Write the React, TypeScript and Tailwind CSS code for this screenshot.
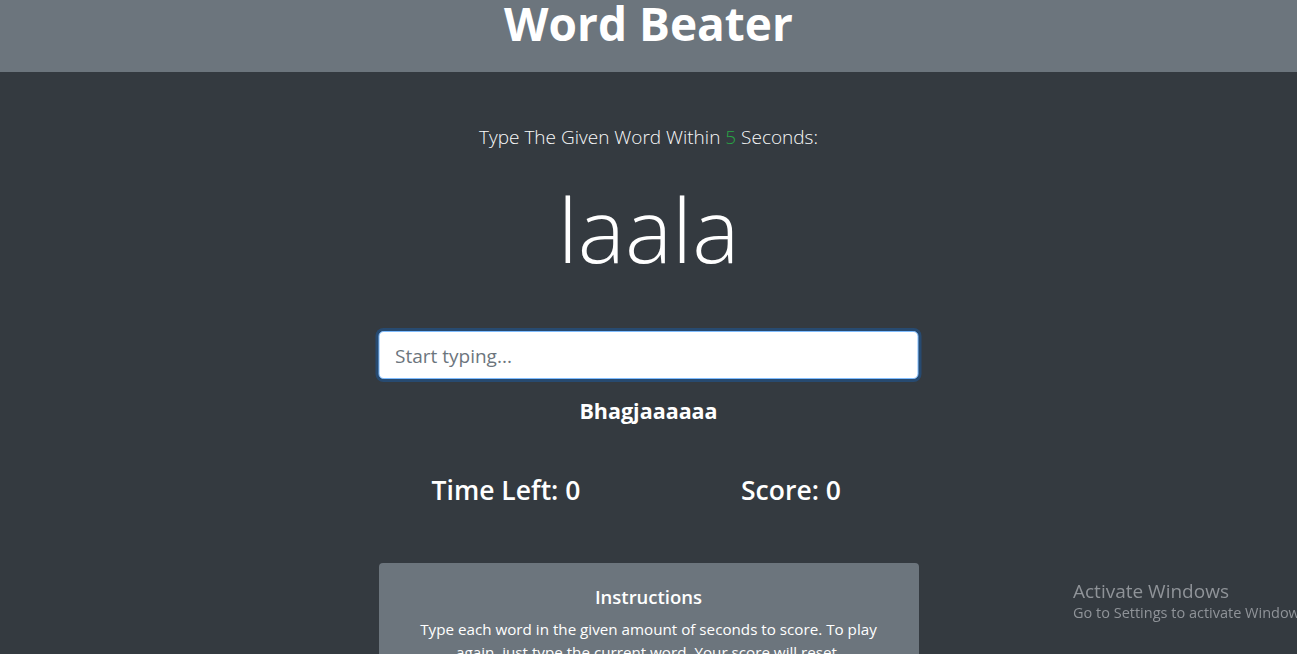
import React from "react";

export default function App() {
  const font = { fontFamily: '"Open Sans", "Noto Sans", sans-serif' };
  return (
    <div className="min-h-screen bg-[#343a40] text-white" style={font}>
      <header className="h-[72px] bg-[#6c757d] overflow-hidden flex justify-center">
        <h1 className="text-[46px] font-bold leading-[48px] mt-[-1px] text-white">Word Beater</h1>
      </header>
      <main className="flex flex-col items-center">
        <p className="mt-[50px] h-[30px] leading-[30px] text-[19px] font-light text-[#f8f9fa]">
          Type The Given Word Within <span className="text-[#28a745]">5</span> Seconds:
        </p>
        <h2 className="mt-[22px] h-[110px] leading-[110px] text-[89px] font-light">laala</h2>
        <div className="mt-[47px] w-[540px] -translate-x-[0.5px]">
          <input
            className="w-full h-[48px] rounded-[5px] border border-[#80bdff] bg-white px-4 pt-[2px] text-[19px] text-[#495057] placeholder:text-[#6c757d] outline-none shadow-[0_0_0_3px_rgba(0,123,255,0.25)]"
            placeholder="Start typing..."
            autoFocus
          />
        </div>
        <h4 className="mt-[17px] h-[29px] leading-[29px] text-[21.5px] font-bold">Bhagjaaaaaa</h4>
        <div className="mt-[48px] w-[570px] grid grid-cols-2">
          <h3 className="text-center h-[34px] leading-[34px] text-[26.5px] font-semibold">Time Left: 0</h3>
          <h3 className="text-center h-[34px] leading-[34px] text-[26.5px] font-semibold">Score: 0</h3>
        </div>
        <div className="mt-[56px] w-[540px] rounded-[4px] bg-[#6c757d] px-5 pt-[22px] pb-5 text-center">
          <h5 className="text-[18.5px] font-semibold leading-[24px] mb-[9px]">Instructions</h5>
          <p className="text-[15.2px] leading-[23px]">
            Type each word in the given amount of seconds to score. To play again, just type the current word. Your score will reset.
          </p>
        </div>
      </main>
      <div className="fixed left-[1073px] top-[578px] text-[#8f9398] whitespace-nowrap pointer-events-none">
        <div className="text-[19px] leading-[26px]">Activate Windows</div>
        <div className="text-[14.5px] leading-[18px]">Go to Settings to activate Windows.</div>
      </div>
    </div>
  );
}
